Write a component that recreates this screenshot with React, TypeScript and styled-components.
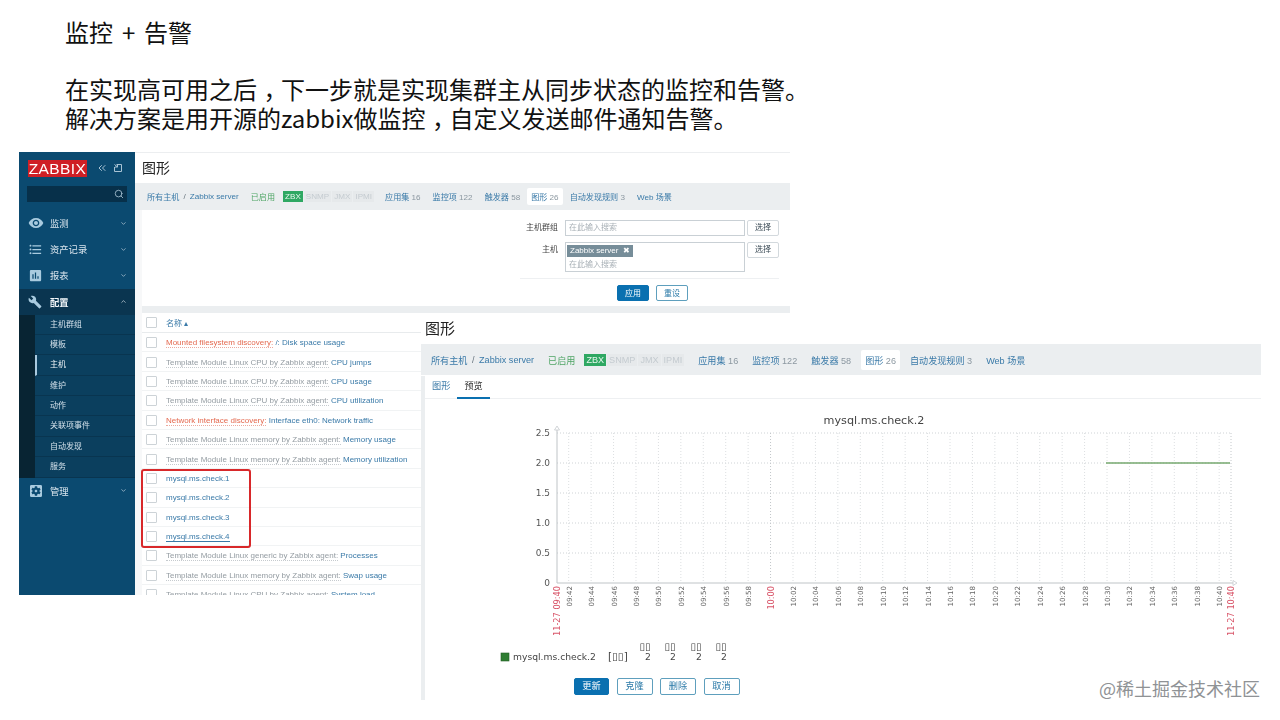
import React from 'react';
import styled, { createGlobalStyle } from 'styled-components';
import { ChevronDown, ChevronUp, ChevronsLeft, Search } from 'lucide-react';
import {
  MdAssessment,
  MdBuild,
  MdFormatListBulleted,
  MdRemoveRedEye,
  MdSettingsApplications,
} from 'react-icons/md';

const SANS = '"Liberation Sans", "Noto Sans CJK SC", sans-serif';
const LINK = '#3a7aa8';

const GlobalStyle = createGlobalStyle`
  html, body {
    margin: 0;
    padding: 0;
    background: #fff;
  }
  * {
    box-sizing: border-box;
  }
`;

const Slide = styled.div`
  width: 1280px;
  height: 720px;
  overflow: hidden;
  background: #fff;
  position: relative;
  font-family: "Noto Sans CJK SC", "Liberation Sans", sans-serif;
`;

const Copy = styled.div`
  padding: 18px 0 0 65px;
  height: 152px;
  font-size: 24px;
  line-height: 28.4px;
  color: #111;
  white-space: nowrap;
`;

const Heading = styled.div`
  word-spacing: 3.5px;
`;

const Spacer = styled.div`
  height: 29px;
`;

// full width comma, sits in the middle of its cell in the picture
const Comma = styled.span`
  display: inline-block;
  width: 24px;
  padding-left: 8px;
  font-feature-settings: "palt";
`;

const Stage = styled.div`
  position: relative;
  margin-left: 19px;
`;

const Shot = styled.div`
  width: 771px;
  height: 443px;
  display: flex;
  overflow: hidden;
  font-family: ${SANS};
  filter: blur(0.4px);
`;

// sidebar
const Sidebar = styled.div`
  width: 116px;
  flex: none;
  background: #0b4a70;
  color: #dbe6ee;
  font-size: 9.3px;
`;

const LogoRow = styled.div`
  height: 34px;
  padding: 8px 8px 0 9px;
  display: flex;
  align-items: flex-start;
`;

const Logo = styled.div`
  width: 59px;
  height: 17px;
  background: #cf1f25;
  color: #fff;
  font-size: 15.5px;
  line-height: 17px;
  text-align: center;
  letter-spacing: 0.4px;
`;

const LogoTools = styled.div`
  display: flex;
  align-items: center;
  gap: 5px;
  margin: 2px 0 0 9px;
  color: #a9c3d4;
`;

const SearchBox = styled.div`
  margin: 0 8px;
  height: 16px;
  background: #07304a;
  display: flex;
  align-items: center;
  justify-content: flex-end;
  padding-right: 3px;
  color: #a9c3d4;
`;

const MenuItem = styled.div<{ $active?: boolean }>`
  height: 26.2px;
  display: flex;
  align-items: center;
  padding: 0 8px 0 9px;
  background: ${(p) => (p.$active ? '#0a3550' : 'transparent')};
  color: ${(p) => (p.$active ? '#f2f6f9' : '#dbe6ee')};
  font-weight: ${(p) => (p.$active ? 700 : 400)};
`;

const MenuIcon = styled.span`
  width: 22px;
  display: flex;
  color: #a9cbdf;
`;

const MenuLabel = styled.span`
  flex: 1;
`;

const MenuFirstGap = styled.div`
  height: 8px;
`;

const SubMenu = styled.div`
  background: #082433;
  padding-left: 16px;
  font-size: 8px;
`;

const SubItem = styled.div<{ $current?: boolean }>`
  height: 20.35px;
  line-height: 20px;
  padding-left: ${(p) => (p.$current ? '13px' : '15px')};
  background: #0b3f5e;
  border-bottom: 1px solid #093550;
  border-left: ${(p) => (p.$current ? '2px solid #a9c9de' : 'none')};
  color: ${(p) => (p.$current ? '#f2f6f9' : '#d3e0ea')};
`;

// main column of the first shot
const Main = styled.div`
  flex: 1;
  min-width: 0;
  background: #f7f8f9;
  border-top: 1px solid #eceef0;
`;

const PageTitle = styled.div<{ $size: number; $height: number; $left: number }>`
  height: ${(p) => p.$height}px;
  background: #fff;
  padding-left: ${(p) => p.$left}px;
  font-size: ${(p) => p.$size}px;
  line-height: ${(p) => p.$height}px;
  color: #222;
`;

const NavBar = styled.div<{ $size: number; $height: number; $left: number }>`
  height: ${(p) => p.$height}px;
  background: #ebeef0;
  display: flex;
  align-items: center;
  padding-left: ${(p) => p.$left}px;
  font-size: ${(p) => p.$size}px;
  white-space: nowrap;
`;

const NavLink = styled.span<{ $gap?: number; $current?: boolean }>`
  margin-left: ${(p) => p.$gap ?? 0}px;
  color: ${LINK};
  ${(p) => (p.$current ? 'background: #fff; padding: 3px 4px; border-radius: 2px;' : '')}
`;

const Count = styled.span`
  color: #8c98a1;
`;

const Slash = styled.span`
  color: #67747e;
  margin: 0 0.5em;
`;

const Enabled = styled.span<{ $gap: number }>`
  margin-left: ${(p) => p.$gap}px;
  color: #4fa565;
`;

const ZbxBadge = styled.span<{ $gap: number }>`
  margin-left: ${(p) => p.$gap}px;
  padding: 1px 2px;
  background: #2fa863;
  color: #e8f7ee;
`;

const MutedBadge = styled.span`
  padding: 1px 2px;
  margin-left: 1px;
  color: #c4cbd0;
  background: #e6e9eb;
`;

const Body = styled.div`
  margin-left: 7px;
  background: #fff;
`;

const Filter = styled.div`
  height: 96px;
  background: #fff;
  padding: 10px 11px 0 0;
  font-size: 8px;
`;

const FilterGrid = styled.div`
  display: grid;
  grid-template-columns: 416px 180px 33px;
  column-gap: 7px 2px;
  row-gap: 6px;
`;

const FieldLabel = styled.div`
  text-align: right;
  color: #444;
  line-height: 16px;
`;

const InputBox = styled.div<{ $tall?: boolean }>`
  height: ${(p) => (p.$tall ? 30 : 16)}px;
  margin-left: 7px;
  width: 180px;
  border: 1px solid #c9d0d5;
  padding: 2px 3px;
  color: #a8b0b6;
  line-height: 10px;
`;

const Tag = styled.div`
  display: inline-flex;
  align-items: center;
  gap: 5px;
  height: 12px;
  padding: 0 3px;
  margin-left: -2px;
  background: #768d99;
  color: #fff;
  margin-bottom: 2px;
`;

const Placeholder = styled.div`
  line-height: 12px;
`;

const PickButton = styled.div`
  width: 32px;
  height: 16px;
  margin-left: 9px;
  border: 1px solid #d3d9dd;
  border-radius: 2px;
  text-align: center;
  line-height: 14px;
  color: #3a4a55;
`;

const FilterDivider = styled.div`
  margin: 6px 0 0 378px;
  border-top: 1px solid #eef0f2;
`;

const ActionRow = styled.div<{ $left: number; $top: number; $gap: number; $size: number; $height: number }>`
  display: flex;
  gap: ${(p) => p.$gap}px;
  margin-top: ${(p) => p.$top}px;
  padding-left: ${(p) => p.$left}px;
  font-size: ${(p) => p.$size}px;
  height: ${(p) => p.$height}px;
`;

const ActionButton = styled.div<{ $primary?: boolean; $width: number }>`
  width: ${(p) => p.$width}px;
  border: 1px solid ${(p) => (p.$primary ? '#0a70b0' : '#5e9fbd')};
  border-radius: 2px;
  background: ${(p) => (p.$primary ? '#0a70b0' : '#fff')};
  color: ${(p) => (p.$primary ? '#fff' : '#2b7aa8')};
  text-align: center;
  line-height: 15px;
`;

const GreyBand = styled.div`
  height: 7px;
  background: #ebeef0;
`;

const TableHead = styled.div`
  height: 20px;
  display: flex;
  align-items: center;
  padding-left: 4px;
  border-bottom: 1px solid #e8ebed;
  font-size: 8px;
  color: ${LINK};
`;

const Row = styled.div`
  height: 19.4px;
  display: flex;
  align-items: center;
  padding: 1px 0 0 4px;
  border-bottom: 1px solid #f1f3f4;
  font-size: 8px;
  white-space: nowrap;
`;

const Check = styled.span`
  width: 11px;
  height: 11px;
  flex: none;
  margin-right: 9px;
  border: 1px solid #cdd3d7;
  border-radius: 1px;
  background: #fff;
`;

const Prefix = styled.span<{ $red?: boolean }>`
  color: ${(p) => (p.$red ? '#e4694f' : '#949ca2')};
  border-bottom: 1px dotted ${(p) => (p.$red ? '#eda99d' : '#c6cbcf')};
`;

const RowLink = styled.span<{ $underlined?: boolean }>`
  color: ${LINK};
  ${(p) => (p.$underlined ? `border-bottom: 1px solid ${LINK};` : '')}
`;

const RedFrame = styled.div`
  position: absolute;
  left: 122px;
  top: 317px;
  width: 110px;
  height: 79px;
  border: 2px solid #d8282a;
  border-radius: 3px;
  z-index: 2;
`;

// second shot, pasted over the first one
const OverShot = styled.div`
  position: absolute;
  left: 402px;
  top: 161px;
  width: 840px;
  height: 387px;
  background: #fff;
  font-family: ${SANS};
  overflow: hidden;
  z-index: 3;
  filter: blur(0.4px);
`;

const OverBody = styled.div`
  height: 325px;
  margin-top: 1px;
  border-left: 4px solid #ebeef0;
  background: #fff;
`;

const Tabs = styled.div`
  height: 23px;
  display: flex;
  align-items: center;
  padding-left: 7px;
  border-bottom: 1px solid #eef0f2;
  font-size: 9.2px;
`;

const Tab = styled.div<{ $active?: boolean }>`
  height: 23px;
  line-height: 21px;
  padding: 0 ${(p) => (p.$active ? 7 : 0)}px;
  margin-left: ${(p) => (p.$active ? 7 : 0)}px;
  color: ${(p) => (p.$active ? '#333' : LINK)};
  border-bottom: ${(p) => (p.$active ? '2px solid #0a70b0' : 'none')};
`;

const Chart = styled.svg`
  display: block;
  width: 836px;
  height: 279px;
`;

const Watermark = styled.div`
  position: absolute;
  right: 20px;
  top: 677px;
  font-family: "Noto Sans CJK SC", sans-serif;
  font-size: 18px;
  line-height: 22px;
  color: #8f9295;
  z-index: 4;
`;

const AutoHideIcon = () => (
  <svg width="10" height="10" viewBox="0 0 10 10" fill="none" stroke="currentColor" strokeWidth="1">
    <path d="M3.5 1.5H8.5V8.5H1.5V4" />
    <path d="M1.5 1.5L4.5 4M4.5 1.5V4H2" />
  </svg>
);

const menuTop = [
  { label: '监测', icon: <MdRemoveRedEye size={16} /> },
  { label: '资产记录', icon: <MdFormatListBulleted size={15} /> },
  { label: '报表', icon: <MdAssessment size={15} /> },
];
const subItems = ['主机群组', '模板', '主机', '维护', '动作', '关联项事件', '自动发现', '服务'];

const rows = [
  { prefix: 'Mounted filesystem discovery:', red: true, name: ' /: Disk space usage' },
  { prefix: 'Template Module Linux CPU by Zabbix agent:', name: ' CPU jumps' },
  { prefix: 'Template Module Linux CPU by Zabbix agent:', name: ' CPU usage' },
  { prefix: 'Template Module Linux CPU by Zabbix agent:', name: ' CPU utilization' },
  { prefix: 'Network interface discovery:', red: true, name: ' Interface eth0: Network traffic' },
  { prefix: 'Template Module Linux memory by Zabbix agent:', name: ' Memory usage' },
  { prefix: 'Template Module Linux memory by Zabbix agent:', name: ' Memory utilization' },
  { name: 'mysql.ms.check.1' },
  { name: 'mysql.ms.check.2' },
  { name: 'mysql.ms.check.3' },
  { name: 'mysql.ms.check.4', underlined: true },
  { prefix: 'Template Module Linux generic by Zabbix agent:', name: ' Processes' },
  { prefix: 'Template Module Linux memory by Zabbix agent:', name: ' Swap usage' },
  { prefix: 'Template Module Linux CPU by Zabbix agent:', name: ' System load' },
];

type NavProps = { size: number; height: number; left: number; gaps: number[] };

const Nav = ({ size, height, left, gaps }: NavProps) => (
  <NavBar $size={size} $height={height} $left={left}>
    <NavLink>所有主机</NavLink>
    <Slash>/</Slash>
    <NavLink>Zabbix server</NavLink>
    <Enabled $gap={gaps[0]}>已启用</Enabled>
    <ZbxBadge $gap={gaps[1]}>ZBX</ZbxBadge>
    <MutedBadge>SNMP</MutedBadge>
    <MutedBadge>JMX</MutedBadge>
    <MutedBadge>IPMI</MutedBadge>
    <NavLink $gap={gaps[2]}>应用集 <Count>16</Count></NavLink>
    <NavLink $gap={gaps[3]}>监控项 <Count>122</Count></NavLink>
    <NavLink $gap={gaps[3]}>触发器 <Count>58</Count></NavLink>
    <NavLink $gap={gaps[4]} $current>图形 <Count>26</Count></NavLink>
    <NavLink $gap={gaps[4]}>自动发现规则 <Count>3</Count></NavLink>
    <NavLink $gap={gaps[3]}>Web 场景</NavLink>
  </NavBar>
);

const CHART_FONT = '"DejaVu Sans", sans-serif';
const X0 = 557;
const X1 = 1231;
const Y_TOP = 433;
const Y_BOTTOM = 583;
const STEP = 22.43;
const FIRST_TICK = 568.7;

const ticks = Array.from({ length: 30 }, (_, i) => {
  const total = 9 * 60 + 42 + i * 2;
  const h = String(Math.floor(total / 60)).padStart(2, '0');
  const m = String(total % 60).padStart(2, '0');
  return { x: FIRST_TICK + i * STEP, label: `${h}:${m}` };
});

const yLabels = ['2.5', '2.0', '1.5', '1.0', '0.5', '0'];
const legendCols = [645, 670, 696, 721];

const RotatedLabel = ({ x, text, red }: { x: number; text: string; red?: boolean }) => (
  <text
    transform={`translate(${x + 3} 586) rotate(-90)`}
    textAnchor="end"
    fontFamily={CHART_FONT}
    fontSize={red ? 8.2 : 7.1}
    fill={red ? '#d9566a' : '#666'}
  >
    {text}
  </text>
);

const GraphChart = () => (
  <Chart viewBox="425 399 836 279">
    <text x="874" y="424" textAnchor="middle" fontFamily={CHART_FONT} fontSize="11.2" fill="#444">
      mysql.ms.check.2
    </text>
    {yLabels.map((label, i) => {
      const y = Y_TOP + i * 30;
      return (
        <g key={label}>
          {i < 5 && <line x1={X0} x2={X1} y1={y} y2={y} stroke="#cfd3d6" strokeWidth="1" strokeDasharray="1 2" />}
          <text x={550} y={y + 3} textAnchor="end" fontFamily={CHART_FONT} fontSize="9" fill="#555">
            {label}
          </text>
        </g>
      );
    })}
    {ticks.map((t) => (
      <line key={t.x} x1={t.x} x2={t.x} y1={Y_TOP} y2={Y_BOTTOM} stroke="#dcdfe1" strokeWidth="1" strokeDasharray="1 2" />
    ))}
    <line x1={770.5} x2={770.5} y1={Y_TOP} y2={Y_BOTTOM} stroke="#c4c8cb" strokeDasharray="1 2" />
    <line x1={X1} x2={X1} y1={Y_TOP} y2={Y_BOTTOM} stroke="#c4c8cb" strokeDasharray="1 2" />
    <line x1={X0} x2={X0} y1={427} y2={Y_BOTTOM} stroke="#bfc4c7" />
    <line x1={X0} x2={1235} y1={Y_BOTTOM} y2={Y_BOTTOM} stroke="#bfc4c7" />
    <path d="M554.5 430L557 426L559.5 430Z" fill="#fff" stroke="#c8cccf" strokeWidth="0.8" />
    <path d="M1233 580.5L1237 583L1233 585.5Z" fill="#fff" stroke="#c8cccf" strokeWidth="0.8" />
    <line x1={1106} x2={1230} y1={463} y2={463} stroke="#76a86f" strokeWidth="1.4" />
    {ticks.filter((t) => t.label !== '10:00').map((t) => (
      <RotatedLabel key={t.label} x={t.x} text={t.label} />
    ))}
    <RotatedLabel x={770.5} text="10:00" red />
    <RotatedLabel x={X0 - 0.5} text="11-27 09:40" red />
    <RotatedLabel x={1231} text="11-27 10:40" red />
    <rect x="501" y="653" width="8" height="8" fill="#2f7d32" stroke="#245f27" strokeWidth="0.6" />
    <text x="513" y="660" fontFamily={CHART_FONT} fontSize="9.2" fill="#444">
      mysql.ms.check.2
    </text>
    <text x="608" y="660" fontFamily={CHART_FONT} fontSize="10.5" fill="#444">
      [▯▯]
    </text>
    {legendCols.map((x) => (
      <g key={x} fontFamily={CHART_FONT} fill="#444">
        <text x={x} y="650" textAnchor="middle" fontSize="10">▯▯</text>
        <text x={x + 3} y="660" textAnchor="middle" fontSize="9.2">2</text>
      </g>
    ))}
  </Chart>
);

export default function App() {
  return (
    <Slide>
      <GlobalStyle />
      <Copy>
        <Heading>监控 + 告警</Heading>
        <Spacer />
        <div>在实现高可用之后<Comma>，</Comma>下一步就是实现集群主从同步状态的监控和告警。</div>
        <div>解决方案是用开源的zabbix做监控<Comma>，</Comma>自定义发送邮件通知告警。</div>
      </Copy>
      <Stage>
        <Shot>
          <Sidebar>
            <LogoRow>
              <Logo>ZABBIX</Logo>
              <LogoTools>
                <ChevronsLeft size={12} />
                <AutoHideIcon />
              </LogoTools>
            </LogoRow>
            <SearchBox>
              <Search size={10} />
            </SearchBox>
            <MenuFirstGap />
            {menuTop.map((item) => (
              <MenuItem key={item.label}>
                <MenuIcon>{item.icon}</MenuIcon>
                <MenuLabel>{item.label}</MenuLabel>
                <ChevronDown size={7} />
              </MenuItem>
            ))}
            <MenuItem $active>
              <MenuIcon><MdBuild size={14} /></MenuIcon>
              <MenuLabel>配置</MenuLabel>
              <ChevronUp size={7} />
            </MenuItem>
            <SubMenu>
              {subItems.map((label) => (
                <SubItem key={label} $current={label === '主机'}>{label}</SubItem>
              ))}
            </SubMenu>
            <MenuItem>
              <MenuIcon><MdSettingsApplications size={16} /></MenuIcon>
              <MenuLabel>管理</MenuLabel>
              <ChevronDown size={7} />
            </MenuItem>
          </Sidebar>
          <Main>
            <PageTitle $size={14} $height={30} $left={7}>图形</PageTitle>
            <Nav size={8.1} height={27} left={12} gaps={[12, 8, 11, 12, 7]} />
            <Body>
              <Filter>
                <FilterGrid>
                  <FieldLabel>主机群组</FieldLabel>
                  <InputBox>在此输入搜索</InputBox>
                  <PickButton>选择</PickButton>
                  <FieldLabel>主机</FieldLabel>
                  <InputBox $tall>
                    <Tag>Zabbix server <span>✖</span></Tag>
                    <Placeholder>在此输入搜索</Placeholder>
                  </InputBox>
                  <PickButton>选择</PickButton>
                </FilterGrid>
                <FilterDivider />
                <ActionRow $left={475} $top={6} $gap={7} $size={8} $height={16}>
                  <ActionButton $primary $width={32}>应用</ActionButton>
                  <ActionButton $width={32}>重设</ActionButton>
                </ActionRow>
              </Filter>
              <GreyBand />
              <TableHead>
                <Check />
                名称 ▴
              </TableHead>
              {rows.map((row, i) => (
                <Row key={i}>
                  <Check />
                  <span>
                    {row.prefix && <Prefix $red={row.red}>{row.prefix}</Prefix>}
                    <RowLink $underlined={row.underlined}>{row.name}</RowLink>
                  </span>
                </Row>
              ))}
            </Body>
          </Main>
        </Shot>
        <RedFrame />
        <OverShot>
          <PageTitle $size={15} $height={31} $left={4}>图形</PageTitle>
          <Nav size={9.1} height={31} left={10} gaps={[14, 9, 14, 14, 10]} />
          <OverBody>
            <Tabs>
              <Tab>图形</Tab>
              <Tab $active>预览</Tab>
            </Tabs>
            <GraphChart />
            <ActionRow $left={149} $top={0} $gap={7.5} $size={9.2} $height={17}>
              <ActionButton $primary $width={35}>更新</ActionButton>
              <ActionButton $width={36}>克隆</ActionButton>
              <ActionButton $width={36}>删除</ActionButton>
              <ActionButton $width={36}>取消</ActionButton>
            </ActionRow>
          </OverBody>
        </OverShot>
      </Stage>
      <Watermark>@稀土掘金技术社区</Watermark>
    </Slide>
  );
}
